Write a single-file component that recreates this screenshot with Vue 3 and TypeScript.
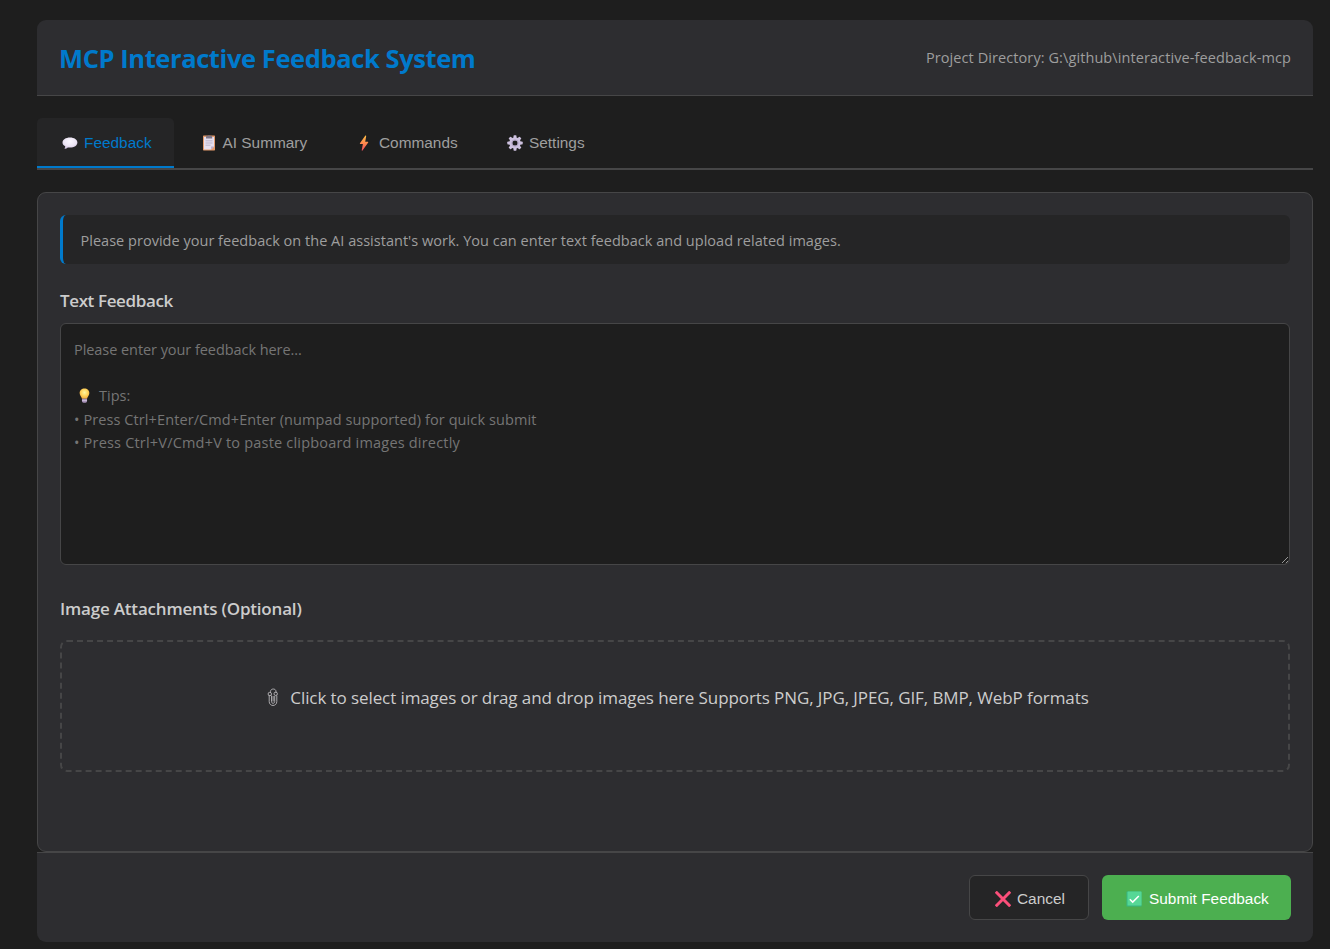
<script setup lang="ts">
import { ref } from 'vue'

type Tab = { id: string; label: string }

const tabs: Tab[] = [
  { id: 'feedback', label: 'Feedback' },
  { id: 'summary', label: 'AI Summary' },
  { id: 'commands', label: 'Commands' },
  { id: 'settings', label: 'Settings' },
]
const active = ref('feedback')
const teeth = [0, 45, 90, 135, 180, 225, 270, 315]
</script>

<template>
  <div class="container">
    <header class="header">
      <h1 class="title"><span>MCP Interactive Feedback System</span></h1>
      <div class="project">Project Directory: G:\github\interactive-feedback-mcp</div>
    </header>

    <nav class="tabs">
      <button
        v-for="t in tabs"
        :key="t.id"
        class="tab"
        :class="[t.id, { active: active === t.id }]"
        @click="active = t.id"
      >
        <svg v-if="t.id === 'feedback'" class="icon" viewBox="0 0 16 16">
          <defs>
            <radialGradient id="bubble" cx="0.5" cy="0.35" r="0.7">
              <stop offset="0" stop-color="#fbf8ff" />
              <stop offset="0.6" stop-color="#ece4f4" />
              <stop offset="1" stop-color="#cdbbdb" />
            </radialGradient>
          </defs>
          <path d="M8 2.400c4.300 0 7.400 2.200 7.400 5.100s-3.100 5.100-7.400 5.100c-.8 0-1.500-.1-2.200-.2-.8.800-1.900 1.300-3 1.300-.3 0-.4-.3-.2-.5.5-.5.700-1.200.600-1.900C1.500 10.500.500 9.100.500 7.500c0-2.900 3.200-5.100 7.500-5.100z" fill="url(#bubble)" />
        </svg>
        <svg v-else-if="t.id === 'summary'" class="icon" viewBox="0 0 16 16">
          <rect x="2" y="0.500" width="12" height="15" rx="0.700" fill="#e39a6b" />
          <path d="M3 2h10v9.600L10.200 14.500H3z" fill="#e5dfef" />
          <path d="M10.200 14.500v-2.900h2.800z" fill="#b9a9c9" />
          <path d="M5 3.500V1.700c0-.4.300-.6.600-.6h1l.5-.6h2l.5.600h1c.3 0 .6.200.6.600v1.800z" fill="#7d7585" />
          <path d="M4.500 5.800h7M4.500 8h7M4.500 10.200h5" stroke="#b3a9c2" stroke-width="0.800" />
        </svg>
        <svg v-else-if="t.id === 'commands'" class="icon" viewBox="0 0 16 16">
          <defs>
            <linearGradient id="bolt" x1="0" y1="0" x2="0" y2="1">
              <stop offset="0" stop-color="#ffc044" />
              <stop offset="0.500" stop-color="#ff8a4e" />
              <stop offset="1" stop-color="#ef4a5c" />
            </linearGradient>
          </defs>
          <path d="M9.400.5 3.900 8.300c-.2.300 0 .7.400.7h2.600L5.700 15.200c-.1.500.5.700.8.300l5.700-8c.2-.3 0-.7-.4-.7H9.200l1-5.800c.1-.500-.5-.8-.8-.5z" fill="url(#bolt)" />
        </svg>
        <svg v-else class="icon" viewBox="0 0 16 16">
          <g fill="#cdc1df">
            <rect
              v-for="a in teeth"
              :key="a"
              x="6.500"
              y="0.300"
              width="3"
              height="4"
              rx="0.700"
              :transform="`rotate(${a} 8 8)`"
            />
          </g>
          <circle cx="8" cy="8" r="4.200" fill="none" stroke="#cdc1df" stroke-width="3.200" />
          <circle cx="8" cy="8" r="3.200" fill="none" stroke="#a99bbd" stroke-width="0.800" />
        </svg>
        <span>{{ t.label }}</span>
      </button>
    </nav>

    <main class="panel">
      <div class="info"><span>Please provide your feedback on the AI assistant's work. You can enter text feedback and upload related images.</span></div>

      <h2 class="label label-text"><span>Text Feedback</span></h2>
      <div class="editor">
        <div class="line l1">Please enter your feedback here...</div>
        <div class="line blank">&nbsp;</div>
        <div class="line tips">
          <svg class="bulb" viewBox="0 0 16 16">
            <defs>
              <radialGradient id="glass" cx="0.500" cy="0.400" r="0.600">
                <stop offset="0" stop-color="#fff3a0" />
                <stop offset="0.550" stop-color="#ffd45c" />
                <stop offset="1" stop-color="#f3a93c" />
              </radialGradient>
            </defs>
            <path d="M8 .4c3 0 5.200 2.200 5.200 5 0 2.600-1.900 3.600-2.500 6H5.300c-.6-2.400-2.500-3.400-2.500-6C2.800 2.600 5 .4 8 .4z" fill="url(#glass)" />
            <path d="M5.300 11.400h5.400v2.400c0 1-.8 1.800-1.700 1.800H7c-.9 0-1.700-.8-1.700-1.800z" fill="#a892b8" />
            <path d="M5.300 13.200h5.400" stroke="#d8cce4" stroke-width="0.800" />
          </svg>
          <span>Tips:</span>
        </div>
        <div class="line l4">• Press Ctrl+Enter/Cmd+Enter (numpad supported) for quick submit</div>
        <div class="line l5">• Press Ctrl+V/Cmd+V to paste clipboard images directly</div>
        <svg class="grip" viewBox="0 0 8 8">
          <path d="M1 7 7 1M4.800 7.200 7.200 4.800" stroke="#b8b8b8" stroke-width="0.800" fill="none" />
        </svg>
      </div>

      <h2 class="label label-image"><span>Image Attachments (Optional)</span></h2>
      <div class="drop">
        <svg class="clip" viewBox="0 0 12 19">
          <g fill="none" stroke="#b9b7ba" stroke-width="0.900">
            <path d="M3.500 4.500V3.500C3.500.2 9 .2 9 3.500V5" />
            <path d="M2.200 7v6.500c0 5.300 7.600 5.300 7.600 0V7.500" />
            <path d="M4.500 7.500v6c0 2.400 3.200 2.400 3.200 0V8" />
            <path d="M6.100 8v5.500" />
            <circle cx="2.800" cy="6" r="1.700" />
            <circle cx="8.700" cy="5.800" r="1.700" />
          </g>
        </svg>
        <span>Click to select images or drag and drop images here Supports PNG, JPG, JPEG, GIF, BMP, WebP formats</span>
      </div>
    </main>

    <footer class="footer">
      <button class="btn cancel">
        <svg class="icon" viewBox="0 0 16 16">
          <path d="M1.800 1.800 14.200 14.200M14.200 1.800 1.800 14.200" stroke="#fb4f7a" stroke-width="3" stroke-linecap="square" />
        </svg>
        <span>Cancel</span>
      </button>
      <button class="btn submit">
        <svg class="icon" viewBox="0 0 16 16">
          <rect x="0.500" y="0.500" width="15" height="15" rx="0.600" fill="#35b584" />
          <rect x="1.500" y="0.500" width="14" height="14" rx="0.600" fill="#56d796" />
          <path d="M3.800 8.200 6.700 11.100 12.800 5" fill="none" stroke="#fff" stroke-width="1.500" />
        </svg>
        <span>Submit Feedback</span>
      </button>
    </footer>
  </div>
</template>

<style>
html,
body {
  background: #1e1e1e;
}
body {
  margin: 0;
  overflow: hidden;
}
</style>

<style scoped>
.container {
  box-sizing: border-box;
  width: 1276px;
  height: 949px;
  margin-left: 37px;
  padding-top: 20px;
  font-family: 'Open Sans', 'Noto Sans', sans-serif;
  font-size: 15px;
  color: #ccc;
  white-space: nowrap;
}
.container * {
  box-sizing: border-box;
}
.header {
  display: flex;
  justify-content: space-between;
  align-items: center;
  height: 76px;
  padding: 0 22px;
  background: #2d2d30;
  border-bottom: 1px solid #464647;
  border-radius: 9px 9px 0 0;
}
.title {
  margin: 1px 0 0;
  font-size: 25.500px;
  font-weight: 700;
  letter-spacing: -0.410px;
  color: #007acc;
}
.project {
  font-size: 14.500px;
  letter-spacing: 0.090px;
  color: #9e9e9e;
}
.tabs {
  display: flex;
  height: 52px;
  margin-top: 22px;
  border-bottom: 2px solid #464647;
}
.tab {
  display: flex;
  align-items: center;
  height: 50px;
  margin: 0 3px 0 0;
  padding: 2px 0 0 25px;
  border: 0;
  border-bottom: 2px solid transparent;
  border-radius: 5px 5px 0 0;
  background: transparent;
  color: #9e9e9e;
  font-family: 'Liberation Sans', Arial, sans-serif;
  font-size: 15.400px;
}
.icon {
  flex: none;
  width: 16px;
  height: 16px;
  margin-right: 6px;
}
.tab.feedback {
  width: 137px;
}
.tab.summary {
  width: 151px;
  padding-left: 24px;
}
.tab.summary .icon {
  margin-right: 5.500px;
}
.tab.commands {
  width: 148px;
  padding-left: 25px;
}
.tab.commands .icon {
  margin-right: 7px;
}
.tab.active {
  background: #252526;
  border-bottom-color: #007acc;
  color: #007acc;
}
.panel {
  height: 660px;
  margin-top: 22px;
  padding: 22px;
  background: #2d2d30;
  border: 1px solid #464647;
  border-radius: 9px;
}
.info {
  display: flex;
  align-items: center;
  height: 49px;
  padding: 2px 0 0 17.500px;
  background: #252526;
  border-left: 3px solid #007acc;
  border-radius: 6px;
  color: #9e9e9e;
  font-size: 14.500px;
  letter-spacing: 0.022px;
}
.label {
  margin: 0;
  font-size: 17px;
  font-weight: 600;
  line-height: 24px;
  color: #ccc;
}
.label-text {
  margin-top: 25px;
  letter-spacing: -0.380px;
}
.label-image {
  margin-top: 32px;
  letter-spacing: -0.190px;
}
.editor {
  position: relative;
  height: 242px;
  margin-top: 10px;
  padding: 14px 13px;
  background: #1e1e1e;
  border: 1px solid #464647;
  border-radius: 6px;
  color: #757575;
  font-size: 14.500px;
}
.line {
  height: 23.300px;
  line-height: 23.300px;
}
.blank {
  height: 22.600px;
}
.l1 {
  letter-spacing: -0.060px;
}
.l4 {
  margin-top: 0.700px;
  letter-spacing: 0.095px;
}
.l5 {
  letter-spacing: 0.195px;
}
.tips {
  display: flex;
  align-items: center;
}
.bulb {
  width: 15px;
  height: 15px;
  margin: 0 7px 0 3px;
}
.grip {
  position: absolute;
  right: 0;
  bottom: 0;
  width: 8px;
  height: 8px;
}
.drop {
  display: flex;
  justify-content: center;
  height: 132px;
  margin-top: 19px;
  padding: 44px 0 0 6px;
  border: 2px dashed #464647;
  border-radius: 7px;
  font-size: 17px;
  line-height: 24px;
  letter-spacing: -0.093px;
}
.clip {
  flex: none;
  width: 12px;
  height: 19px;
  margin: 2px 11px 0 0;
}
.footer {
  display: flex;
  justify-content: flex-end;
  gap: 13px;
  height: 90px;
  padding: 22px 22px 0;
  background: #2d2d30;
  border-top: 1px solid #464647;
  border-radius: 0 0 9px 9px;
}
.btn {
  display: flex;
  align-items: center;
  height: 45px;
  margin: 0;
  padding: 2px 0 0 25px;
  border: 0;
  border-radius: 6px;
  font-family: 'Liberation Sans', Arial, sans-serif;
  font-size: 15.400px;
}
.cancel {
  width: 120px;
  background: #252526;
  border: 1px solid #464647;
  color: #ccc;
}
.submit {
  width: 189px;
  background: #4caf50;
  color: #fff;
}
.submit .icon {
  margin: 0 7px 0 -1px;
}
</style>
